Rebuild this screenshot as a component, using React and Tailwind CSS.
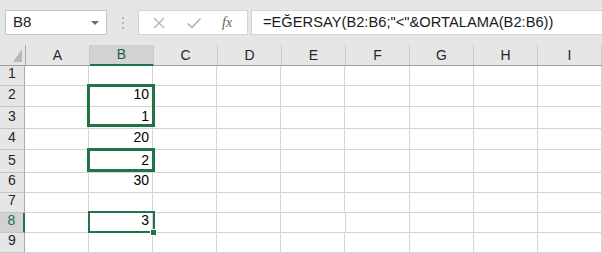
import React from 'react';

const cols = ['A', 'B', 'C', 'D', 'E', 'F', 'G', 'H', 'I'];

const rows = [
    { n: 1, h: 'h-[20px]', b: '' },
    { n: 2, h: 'h-[21px]', b: '10' },
    { n: 3, h: 'h-[22px]', b: '1' },
    { n: 4, h: 'h-[21px]', b: '20' },
    { n: 5, h: 'h-[23px]', b: '2' },
    { n: 6, h: 'h-[20px]', b: '30' },
    { n: 7, h: 'h-[20px]', b: '' },
    { n: 8, h: 'h-[20px]', b: '3' },
    { n: 9, h: 'h-[20px]', b: '' },
    { n: '', h: 'h-[20px]', b: '' },
];

const FormulaBar = () => (
    <div className="h-[45px] bg-[#e6e6e6] flex items-start pt-[10px] pl-[5px]">
        <div className="w-[102px] h-[25px] bg-white border border-[#c6c6c6] flex items-center justify-between pl-[7px] pr-[7px]">
            <span className="text-[15px] text-[#222]">B8</span>
            <span className="w-0 h-0 border-l-[4px] border-r-[4px] border-t-[4px] border-l-transparent border-r-transparent border-t-[#6b6b6b]"></span>
        </div>
        <div className="w-[31px] h-[25px] flex flex-col items-center justify-center gap-[3px]">
            <span className="w-[2px] h-[2px] bg-[#b4b4b4]"></span>
            <span className="w-[2px] h-[2px] bg-[#b4b4b4]"></span>
            <span className="w-[2px] h-[2px] bg-[#b4b4b4]"></span>
        </div>
        <div className="w-[110px] h-[25px] bg-white border border-[#d4d4d4] flex items-center">
            <svg width="14" height="14" viewBox="0 0 14 14" className="ml-[13px]">
                <path d="M2 2 L12 12 M12 2 L2 12" stroke="#b0b0b0" strokeWidth="1.3" fill="none" />
            </svg>
            <svg width="16" height="14" viewBox="0 0 16 14" className="ml-[20px]">
                <path d="M1.5 7.5 L6 11.5 L14.5 2.5" stroke="#b0b0b0" strokeWidth="1.6" fill="none" />
            </svg>
            <span className="ml-[20px] text-[14px] italic text-[#5e5e5e] font-['Liberation_Serif',serif]">fx</span>
        </div>
        <div className="ml-[3px] flex-1 h-[25px] bg-white border border-[#d4d4d4] border-r-0 flex items-center pl-[11px]">
            <span className="text-[14.7px] text-[#1a1a1a] whitespace-nowrap">=EĞERSAY(B2:B6;"&lt;"&amp;ORTALAMA(B2:B6))</span>
        </div>
    </div>
);

const Sheet = () => (
    <div className="relative">
        <div className="flex h-[20px] bg-[#e6e6e6] border-b border-[#9f9f9f] box-content">
            <div className="w-[25px] border-r border-[#ababab] box-content relative">
                <svg width="9" height="13" viewBox="0 0 9 13" className="absolute right-[3px] bottom-[3px]">
                    <path d="M9 0 L9 13 L0 13 Z" fill="#b9b9b9" />
                </svg>
            </div>
            {cols.map(c => (
                <div
                    key={c}
                    className={c === 'B'
                        ? 'w-[63px] border-r border-[#c8c8c8] box-content bg-[#d2d2d2] border-b-2 border-b-[#217346] -mb-px flex items-center justify-center text-[14px] text-[#1f5e3b]'
                        : 'w-[63px] border-r border-[#c8c8c8] box-content flex items-center justify-center text-[14px] text-[#262626]'}
                >
                    {c}
                </div>
            ))}
        </div>
        {rows.map((r, i) => (
            <div key={i} className={`flex ${r.h} bg-white`}>
                <div
                    className={r.n === 8
                        ? 'w-[24px] border-r-2 border-r-[#217346] border-b border-b-[#c6c6c6] bg-[#d2d2d2] box-content flex items-end justify-center pb-px text-[14px] text-[#217346]'
                        : 'w-[25px] border-r border-r-[#ababab] border-b border-b-[#c6c6c6] bg-[#e6e6e6] box-content flex items-end justify-center pb-px text-[14px] text-[#262626]'}
                >
                    {r.n}
                </div>
                {cols.map(c => (
                    <div key={c} className="w-[63px] border-r border-b border-[#d4d4d4] box-content flex items-end justify-end pr-[3px] pb-px text-[14px] text-black">
                        {c === 'B' ? r.b : ''}
                    </div>
                ))}
            </div>
        ))}
        <div className="absolute left-[87px] top-[39px] w-[68px] h-[43px] border-[3px] border-[#217346]"></div>
        <div className="absolute left-[87px] top-[103px] w-[68px] h-[24px] border-[3px] border-[#217346]"></div>
        <div className="absolute left-[88px] top-[166px] w-[67px] h-[22px] border-2 border-[#217346]"></div>
        <div className="absolute left-[150px] top-[184px] w-[7px] h-[7px] bg-[#217346] border border-white"></div>
    </div>
);

export default function App() {
    return (
        <div className="w-[602px] h-[253px] overflow-hidden bg-white font-['Liberation_Sans',Arial,sans-serif]">
            <FormulaBar />
            <Sheet />
        </div>
    );
}
